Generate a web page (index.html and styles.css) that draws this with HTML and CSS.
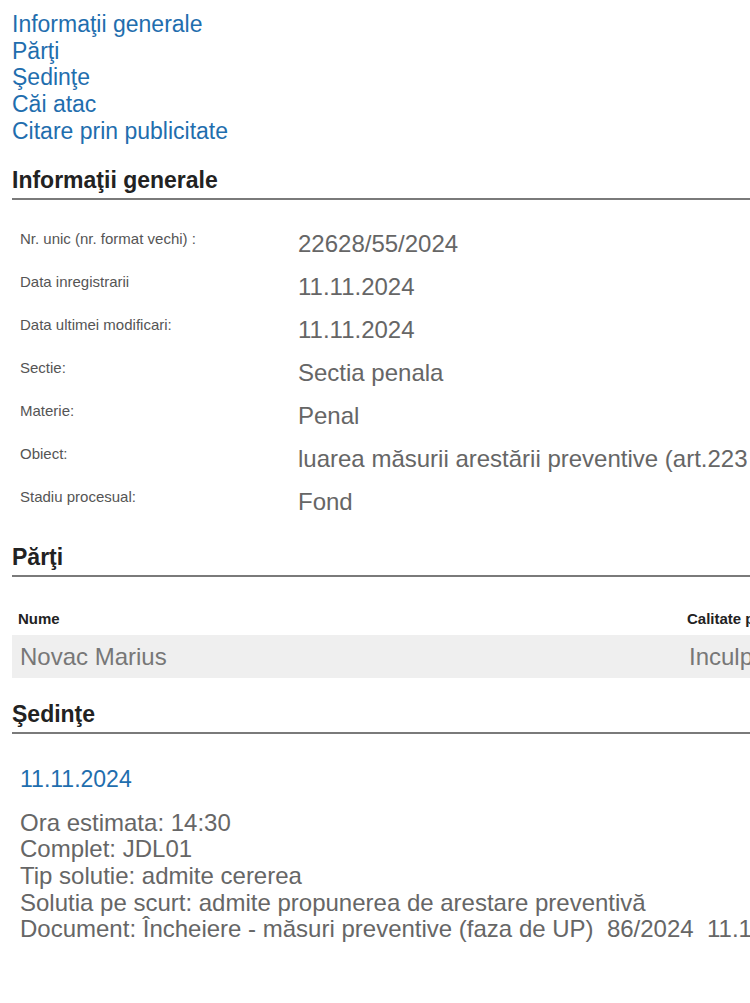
FILE: index.html
```html
<!DOCTYPE html>
<html>
<head>
    <meta charset="utf-8">
    <link rel="stylesheet" href="styles.css">
</head>
<body>
    <div class="page">
        <!-- anchors to the sections below -->
        <div class="case-nav">
            <a href="#info">Informaţii generale</a>
            <a href="#parti">Părţi</a>
            <a href="#sedinte">Şedinţe</a>
            <a href="#cai-atac">Căi atac</a>
            <a href="#citare">Citare prin publicitate</a>
        </div>

        <h2 class="section-title" id="info">Informaţii generale</h2>
        <table class="info-table">
            <tr><td class="info-label">Nr. unic (nr. format vechi) :</td><td class="info-value">22628/55/2024</td></tr>
            <tr><td class="info-label">Data inregistrarii</td><td class="info-value">11.11.2024</td></tr>
            <tr><td class="info-label">Data ultimei modificari:</td><td class="info-value">11.11.2024</td></tr>
            <tr><td class="info-label">Sectie:</td><td class="info-value">Sectia penala</td></tr>
            <tr><td class="info-label">Materie:</td><td class="info-value">Penal</td></tr>
            <tr><td class="info-label">Obiect:</td><td class="info-value">luarea măsurii arestării preventive (art.223 C.p.p.)</td></tr>
            <tr><td class="info-label">Stadiu procesual:</td><td class="info-value">Fond</td></tr>
        </table>

        <h2 class="section-title" id="parti">Părţi</h2>
        <table class="parti-table">
            <tr>
                <th class="col-nume">Nume</th>
                <th>Calitate parte</th>
            </tr>
            <tr class="row-alt">
                <td>Novac Marius</td>
                <td>Inculpat</td>
            </tr>
        </table>

        <h2 class="section-title" id="sedinte">Şedinţe</h2>
        <div class="sedinta">
            <div class="sedinta-date">11.11.2024</div>
            <div class="sedinta-details">
                Ora estimata: 14:30<br>
                Complet: JDL01<br>
                Tip solutie: admite cererea<br>
                Solutia pe scurt: admite propunerea de arestare preventivă<br>
                Document: Încheiere - măsuri preventive (faza de UP)&nbsp; 86/2024&nbsp; 11.11.2024
            </div>
        </div>
    </div>
</body>
</html>
```

FILE: styles.css
```css
html, body {
    overflow-x: hidden;
}

body {
    background-color: #FFFFFF;
    font-family: "Liberation Sans", Arial, sans-serif;
    margin: 0;
    padding: 11px 12px 0 12px;
}

.page {
    width: 1100px;
}

.case-nav a {
    display: block;
    color: #1f6eae;
    font-size: 23px;
    line-height: 26.7px;
    text-decoration: none;
}

.section-title {
    color: #222;
    font-size: 23px;
    font-weight: bold;
    line-height: 26px;
    margin: 22px 0 0 0;
    padding-bottom: 5px;
    border-bottom: 2px solid #7a7a7a;
}

.info-table {
    border-collapse: collapse;
    margin-top: 22px;
    margin-bottom: 21px;
}

.info-table td {
    vertical-align: top;
    padding: 8px 8px;
    height: 27px;
    white-space: nowrap;
}

.info-label {
    width: 262px;
    color: #555;
    font-size: 15px;
    line-height: 18px;
}

.info-value {
    color: #666;
    font-size: 24px;
    line-height: 27px;
}

.section-title#parti,
.section-title#sedinte {
    margin-top: 0;
}

.parti-table {
    width: 100%;
    border-collapse: collapse;
    margin-top: 25px;
    margin-bottom: 23px;
}

.parti-table th {
    text-align: left;
    color: #222;
    font-size: 15px;
    line-height: 17px;
    padding: 8px 6px;
}

.parti-table .col-nume {
    width: 657px;
}

.parti-table td {
    color: #777;
    font-size: 24px;
    line-height: 27px;
    padding: 8px 8px;
}

.row-alt {
    background-color: #efefef;
}

.sedinta {
    padding: 32px 8px 0 8px;
}

.sedinta-date {
    color: #1f6eae;
    font-size: 23px;
    line-height: 27px;
    margin-bottom: 17px;
}

.sedinta-details {
    color: #666;
    font-size: 24px;
    line-height: 26.7px;
    white-space: nowrap;
}
```
